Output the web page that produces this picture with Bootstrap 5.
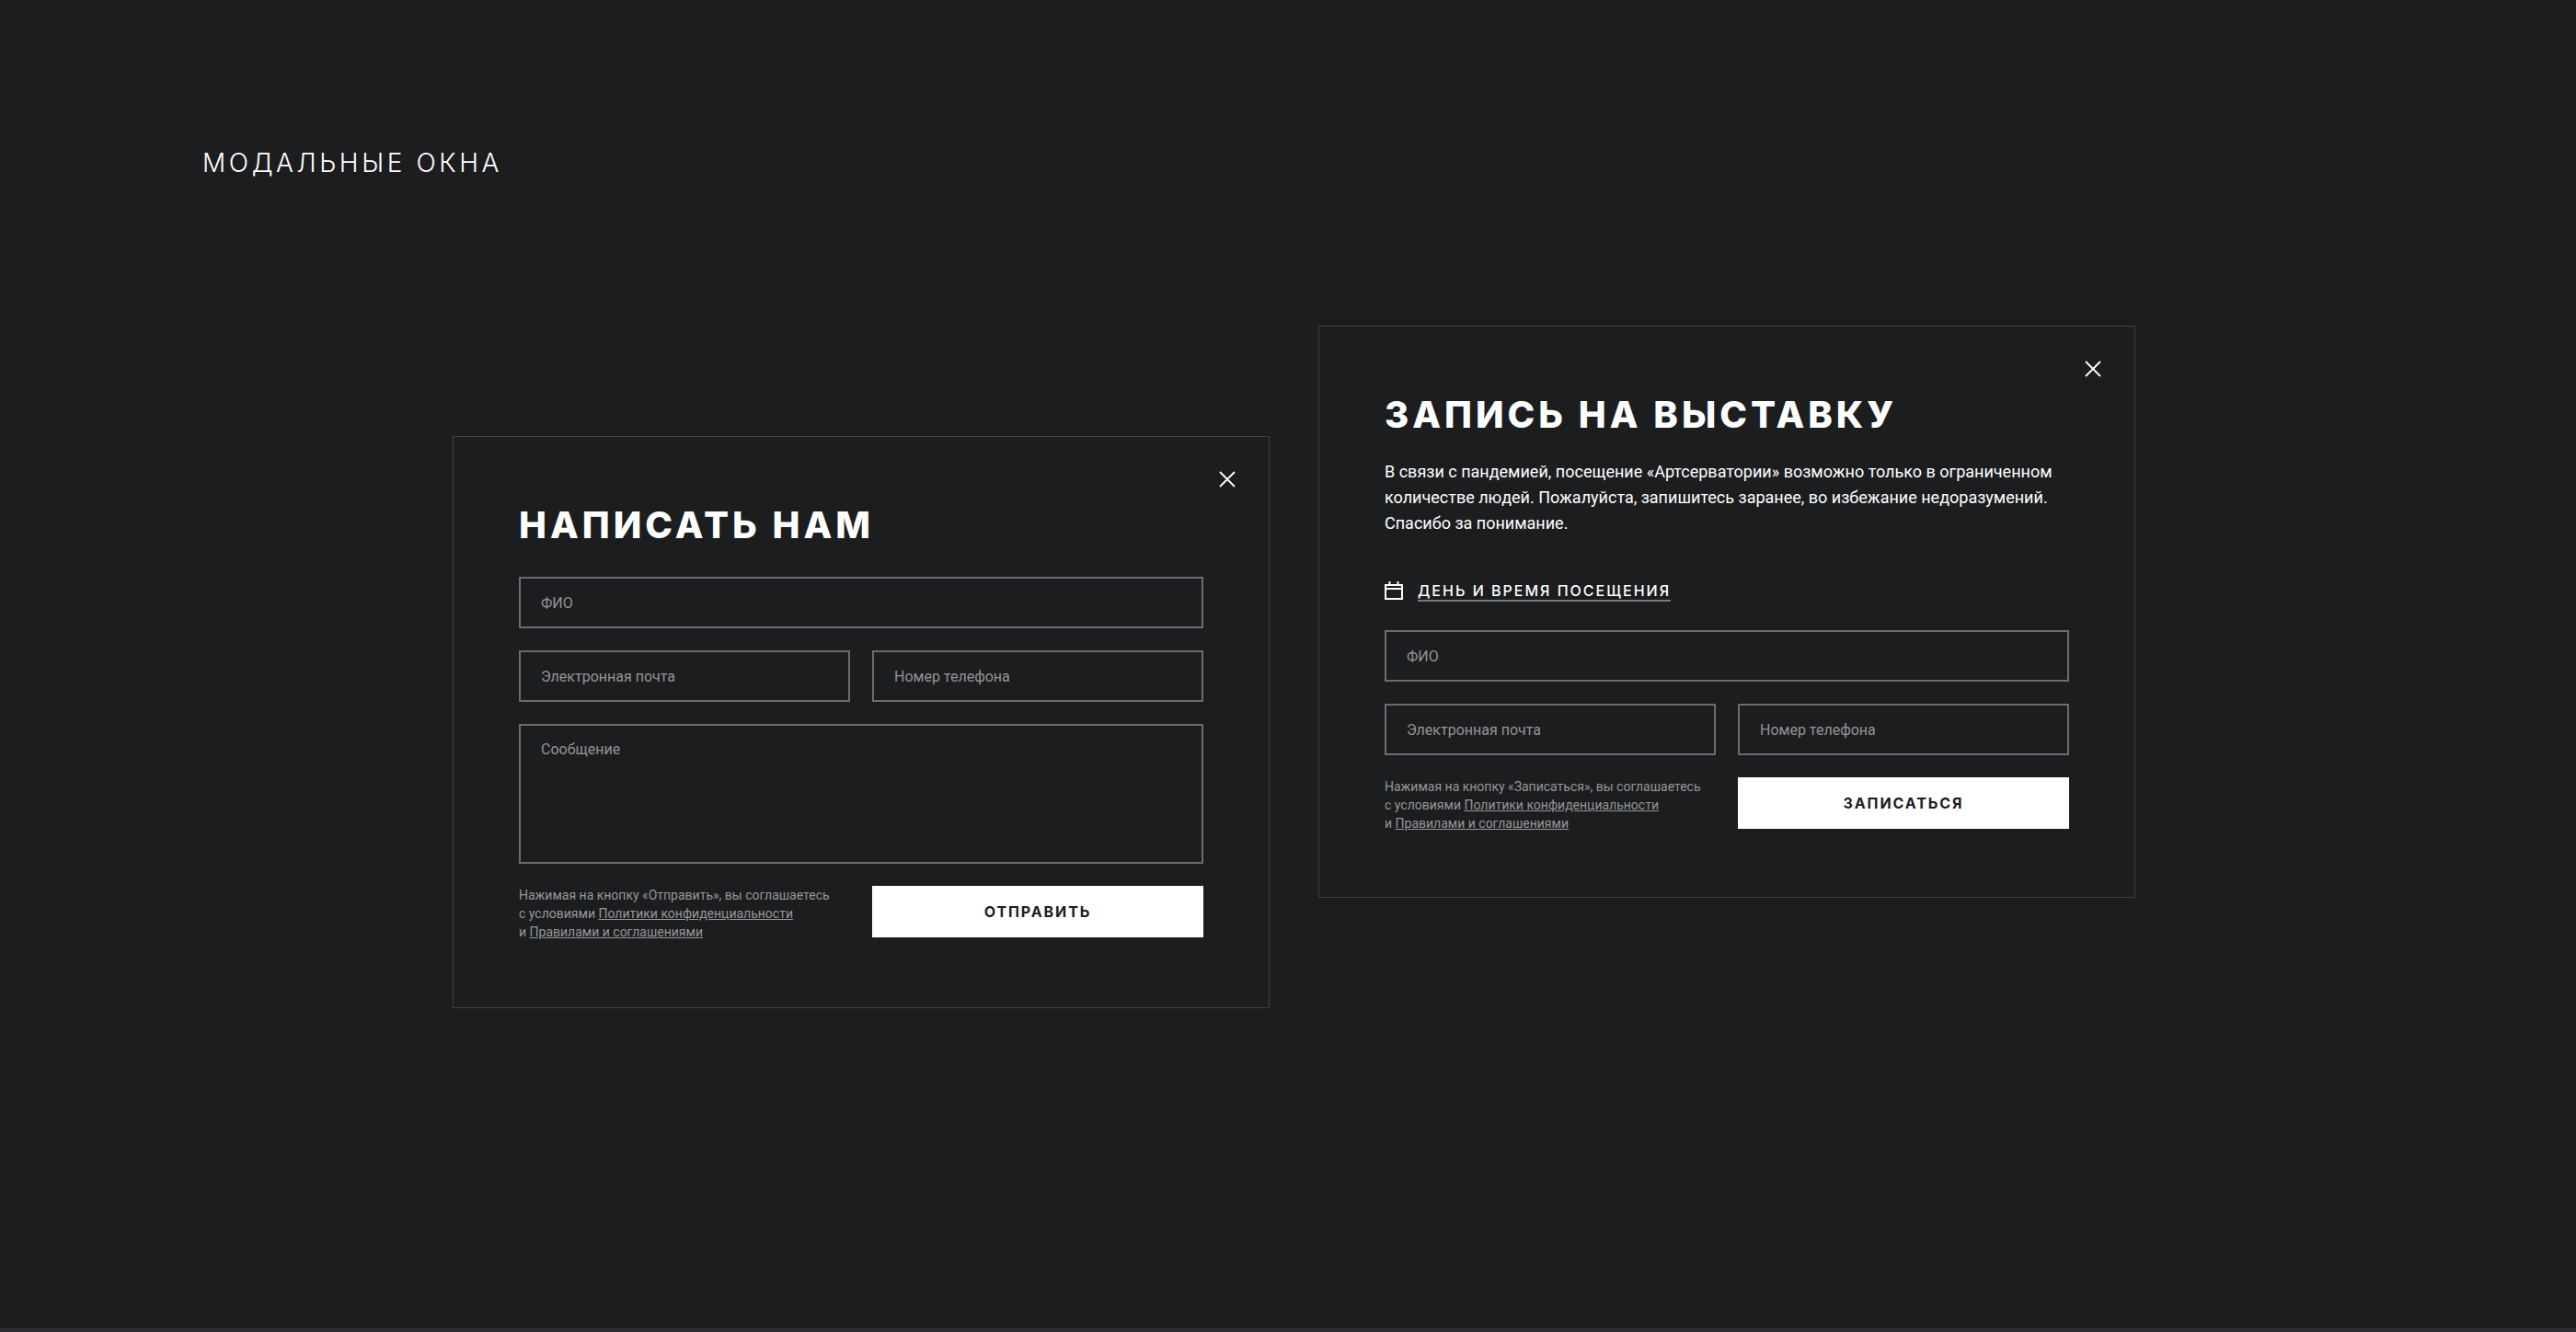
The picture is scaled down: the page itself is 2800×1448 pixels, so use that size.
<!DOCTYPE html>
<html lang="ru">
<head>
  <meta charset="UTF-8">
  <title>Модальные окна</title>
  <link href="https://cdn.jsdelivr.net/npm/bootstrap@5.3.3/dist/css/bootstrap.min.css" rel="stylesheet">
  <meta name="viewport" content="width=device-width, initial-scale=1">

<style>
  body {
    background-color: #1c1d1f;
    color: #fff;
    font-family: Roboto, "Liberation Sans", sans-serif;
    min-height: 100vh;
    display: flex;
    flex-direction: column;
  }
  .page-wrap { flex: 1 0 auto; padding: 160px 220px 0; }
  .page-title {
    font-family: Inter, "Noto Sans", sans-serif;
    font-size: 28px;
    font-weight: 300;
    line-height: 34px;
    letter-spacing: 3.6px;
    margin: 0;
  }
  .page-foot { height: 4px; background-color: #2c2e31; }

  .modal-row { gap: 53px; padding-left: 272px; }
  .modal-first { margin-top: 280px; }
  .modal-second { margin-top: 160px; }
  .form-box {
    width: 888px;
    height: 622px;
    padding: 72px 71px 71px;
    background-color: transparent;
    border: 1px solid #3f4043;
    border-radius: 0;
    color: #fff;
  }
  .close-x {
    position: absolute;
    top: 37px;
    right: 36px;
    width: 18px;
    height: 18px;
    padding: 0;
    border: 0;
    background: none;
    line-height: 0;
  }
  .form-title {
    font-family: Inter, "Noto Sans", sans-serif;
    font-size: 40px;
    font-weight: 800;
    line-height: 48px;
    letter-spacing: 4px;
    margin: 0;
  }
  .intro-text { font-size: 18px; line-height: 28px; margin: 24px 0 0; }
  .date-link {
    margin: 49px 0 31px;
    height: 22px;
    flex-shrink: 0;
  }
  .date-icon { margin-bottom: 2px; }
  .date-link a {
    font-family: Inter, "Noto Sans", sans-serif;
    font-size: 16px;
    font-weight: 500;
    letter-spacing: 2px;
    color: #fff;
    text-decoration: none;
    border-bottom: 2px solid #77787b;
    line-height: 19px;
  }
  .form-field.form-control {
    height: 56px;
    padding: 14px 22px;
    font-size: 16px;
    line-height: 24px;
    color: #fff;
    background-color: transparent;
    border: 2px solid #6b6c70;
    border-radius: 0;
    box-shadow: none;
    resize: none;
  }
  .form-field.form-control::placeholder { color: #939496; opacity: 1; }
  textarea.form-field.form-control { height: 152px; }
  .title-gap { margin-top: 32px; }
  .legal-text { font-size: 14px; line-height: 20px; color: #96979a; width: 360px; }
  .legal-text a { color: #96979a; }
  .submit-btn.btn {
    height: 56px;
    font-family: Inter, "Noto Sans", sans-serif;
    font-size: 16px;
    font-weight: 700;
    letter-spacing: 1.9px;
    color: #1c1d1f;
    background-color: #fff;
    border: 0;
    border-radius: 0;
  }
</style>

</head>
<body>

  <div class="page-wrap">
    <h1 class="page-title">МОДАЛЬНЫЕ ОКНА</h1>

    <div class="d-flex align-items-start modal-row">
      <div class="card position-relative form-box modal-first">
        <button type="button" class="close-x" aria-label="Закрыть">
          <svg width="18" height="18" viewBox="0 0 18 18" fill="none" stroke="#fff" stroke-width="1.8"><path d="M1 1L17 17M17 1L1 17"/></svg>
        </button>
        <h2 class="form-title">НАПИСАТЬ НАМ</h2>
        <form class="title-gap">
          <div class="row g-4">
            <div class="col-12"><input type="text" class="form-control form-field" placeholder="ФИО"></div>
            <div class="col-6"><input type="text" class="form-control form-field" placeholder="Электронная почта"></div>
            <div class="col-6"><input type="text" class="form-control form-field" placeholder="Номер телефона"></div>
            <div class="col-12"><textarea class="form-control form-field" placeholder="Сообщение"></textarea></div>
            <div class="col-6">
              <div class="legal-text">Нажимая на кнопку «Отправить», вы соглашаетесь<br>с условиями <a href="#">Политики конфиденциальности</a><br>и <a href="#">Правилами и соглашениями</a></div>
            </div>
            <div class="col-6"><button type="button" class="btn submit-btn w-100">ОТПРАВИТЬ</button></div>
          </div>
        </form>
      </div>

      <div class="card position-relative form-box modal-second">
        <button type="button" class="close-x" aria-label="Закрыть">
          <svg width="18" height="18" viewBox="0 0 18 18" fill="none" stroke="#fff" stroke-width="1.8"><path d="M1 1L17 17M17 1L1 17"/></svg>
        </button>
        <h2 class="form-title">ЗАПИСЬ НА ВЫСТАВКУ</h2>
        <p class="intro-text">В связи с пандемией, посещение «Артсерватории» возможно только в ограниченном количестве людей. Пожалуйста, запишитесь заранее, во избежание недоразумений. Спасибо за понимание.</p>
        <div class="d-flex align-items-center gap-3 date-link">
          <svg class="date-icon" width="20" height="20" viewBox="0 0 20 20" fill="none" stroke="#fff" stroke-width="2"><path d="M1 4H19V19H1ZM1 8H19M5.5 0V4M14.5 0V4"/></svg>
          <a href="#">ДЕНЬ И ВРЕМЯ ПОСЕЩЕНИЯ</a>
        </div>
        <form>
          <div class="row g-4">
            <div class="col-12"><input type="text" class="form-control form-field" placeholder="ФИО"></div>
            <div class="col-6"><input type="text" class="form-control form-field" placeholder="Электронная почта"></div>
            <div class="col-6"><input type="text" class="form-control form-field" placeholder="Номер телефона"></div>
            <div class="col-6">
              <div class="legal-text">Нажимая на кнопку «Записаться», вы соглашаетесь<br>с условиями <a href="#">Политики конфиденциальности</a><br>и <a href="#">Правилами и соглашениями</a></div>
            </div>
            <div class="col-6"><button type="button" class="btn submit-btn w-100">ЗАПИСАТЬСЯ</button></div>
          </div>
        </form>
      </div>
    </div>
  </div>

  <div class="page-foot"></div>

  <script src="https://cdn.jsdelivr.net/npm/bootstrap@5.3.3/dist/js/bootstrap.bundle.min.js"></script>
</body>
</html>
